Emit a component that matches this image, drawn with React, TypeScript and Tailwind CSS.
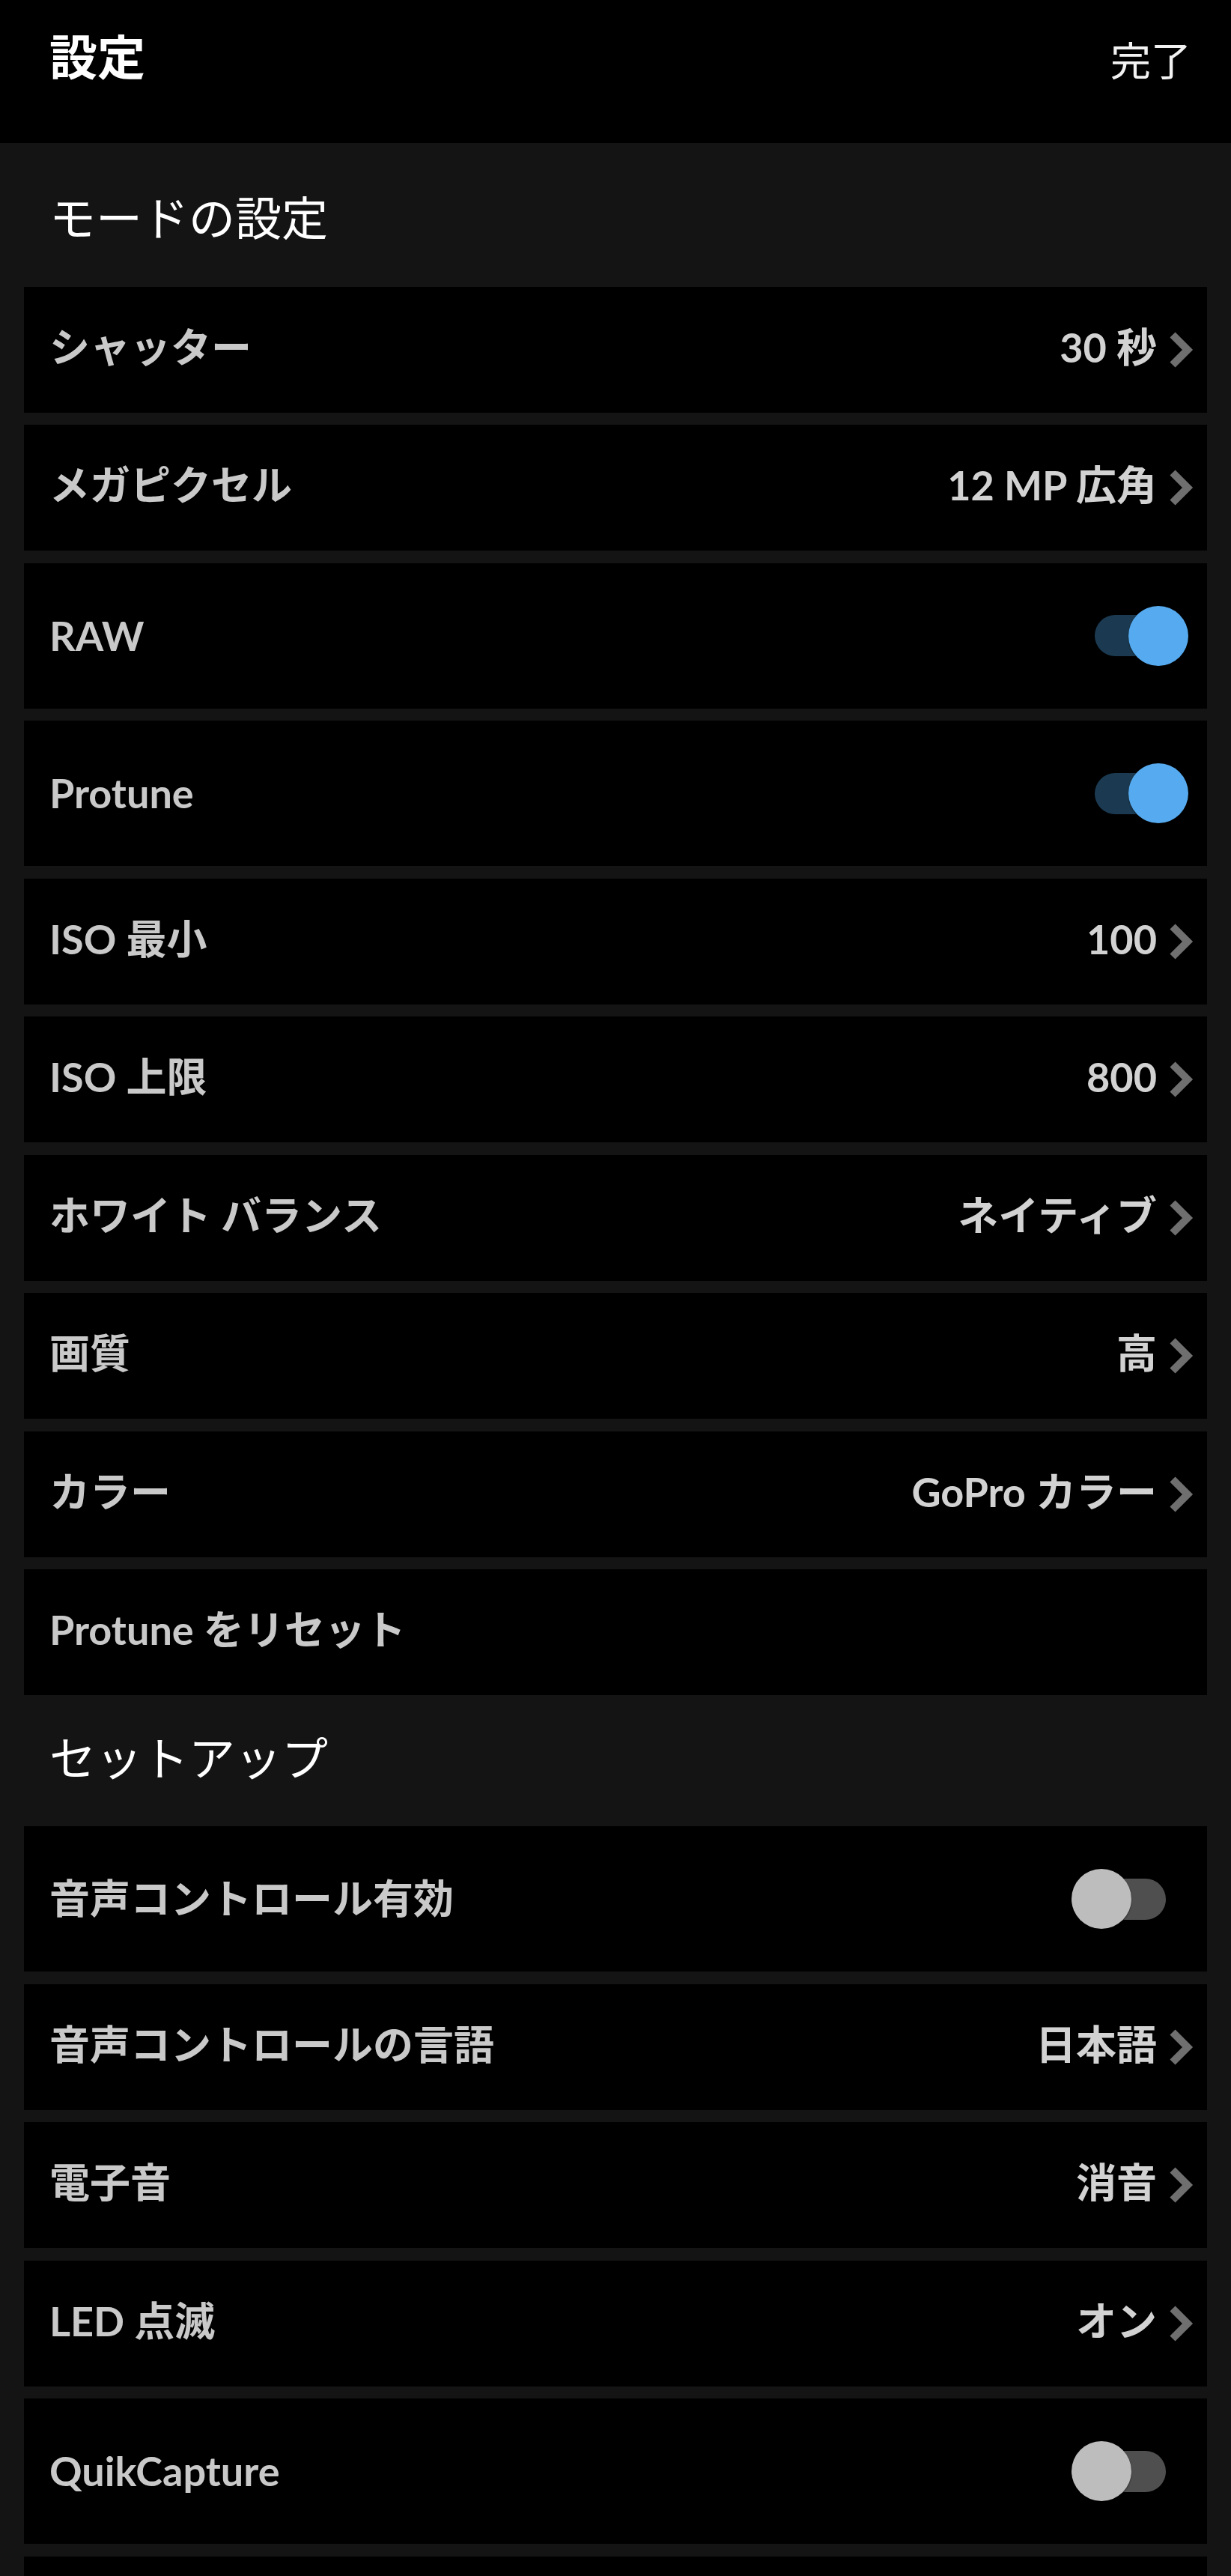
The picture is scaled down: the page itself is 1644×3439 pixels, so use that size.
import React from "react";

type Row =
  | { kind: "value"; label: string; value?: string }
  | { kind: "toggle"; label: string; on: boolean }
  | { kind: "plain"; label: string };

const modeRows: Row[] = [
  { kind: "value", label: "シャッター", value: "30 秒" },
  { kind: "value", label: "メガピクセル", value: "12 MP 広角" },
  { kind: "toggle", label: "RAW", on: true },
  { kind: "toggle", label: "Protune", on: true },
  { kind: "value", label: "ISO 最小", value: "100" },
  { kind: "value", label: "ISO 上限", value: "800" },
  { kind: "value", label: "ホワイト バランス", value: "ネイティブ" },
  { kind: "value", label: "画質", value: "高" },
  { kind: "value", label: "カラー", value: "GoPro カラー" },
  { kind: "plain", label: "Protune をリセット" },
];

const setupRows: Row[] = [
  { kind: "toggle", label: "音声コントロール有効", on: false },
  { kind: "value", label: "音声コントロールの言語", value: "日本語" },
  { kind: "value", label: "電子音", value: "消音" },
  { kind: "value", label: "LED 点滅", value: "オン" },
  { kind: "toggle", label: "QuikCapture", on: false },
  { kind: "plain", label: "" },
];

const font = "font-['Lato','Noto_Sans_CJK_JP',sans-serif]";

function Chevron() {
  return (
    <svg width="33" height="50" viewBox="0 0 33 50" className="shrink-0">
      <polyline
        points="4,5 24,25 4,45"
        fill="none"
        stroke="#6f6f6f"
        strokeWidth="10"
        strokeLinejoin="miter"
      />
    </svg>
  );
}

function Toggle({ on }: { on: boolean }) {
  return (
    <div className="relative h-[80px] w-[156px] shrink-0">
      <div
        className={`absolute left-[31px] top-[12.5px] h-[55px] w-[95px] rounded-full ${
          on ? "bg-[#1b3a51]" : "bg-[#4f4f4f]"
        }`}
      />
      <div
        className={`absolute top-0 h-[80px] w-[80px] rounded-full shadow-[0_1px_2px_rgba(0,0,0,0.6)] ${
          on ? "right-0 bg-[#56abf0]" : "left-0 bg-[#bdbdbd]"
        }`}
      />
    </div>
  );
}

function SettingRow({ row }: { row: Row }) {
  if (row.kind === "toggle") {
    return (
      <div className="flex h-[194px] items-center justify-between bg-black pl-[34px] pr-[25px]">
        <span className="text-[54px] leading-none font-bold text-[#c9c9c9]">
          {row.label}
        </span>
        <Toggle on={row.on} />
      </div>
    );
  }
  return (
    <div className="flex h-[168px] items-center justify-between bg-black pl-[34px] pr-[17px]">
      <span className="pb-[6px] text-[54px] leading-none font-bold text-[#c9c9c9]">
        {row.label}
      </span>
      {row.kind === "value" && (
        <div className="flex items-center gap-[17px]">
          <span className="pb-[6px] text-[54px] leading-none font-bold text-[#d2d2d2]">
            {row.value}
          </span>
          <Chevron />
        </div>
      )}
    </div>
  );
}

function Section({ title, rows }: { title: string; rows: Row[] }) {
  return (
    <section>
      <div className="flex h-[175px] items-center pb-[8px] pl-[66px]">
        <h2 className="text-[62px] leading-none font-normal text-white">
          {title}
        </h2>
      </div>
      <div className="flex flex-col gap-[16.5px] px-[32px]">
        {rows.map((r, i) => (
          <SettingRow key={i} row={r} />
        ))}
      </div>
    </section>
  );
}

export default function App() {
  return (
    <div className={`min-h-screen bg-[#141414] ${font}`}>
      <header className="flex h-[191px] items-start justify-between bg-black pl-[66px] pr-[53px]">
        <h1 className="pt-[44px] text-[64px] leading-none font-bold text-white">
          設定
        </h1>
        <button className="pt-[55px] text-[54px] leading-none font-normal text-[#f2f2f2]">
          完了
        </button>
      </header>
      <main className="pt-[16.5px] pb-[40px]">
        <Section title="モードの設定" rows={modeRows} />
        <Section title="セットアップ" rows={setupRows} />
      </main>
    </div>
  );
}
